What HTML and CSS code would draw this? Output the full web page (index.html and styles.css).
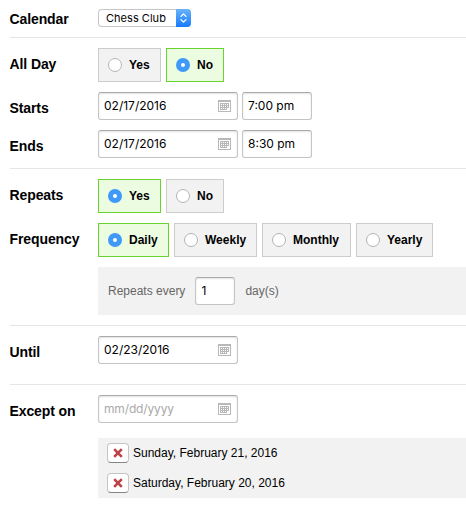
FILE: index.html
```html
<!DOCTYPE html>
<html lang="en">
<head>
<meta charset="utf-8">
<title>Event schedule</title>
<link rel="stylesheet" href="styles.css">
</head>
<body>
<svg class="defs" width="0" height="0">
  <symbol id="cal" viewBox="0 0 13 12">
    <path fill="#b8b8b8" fill-rule="evenodd" d="M0 0h13v12H0zM1 2v9h11V2z"/>
    <path fill="#b8b8b8" d="M2 3h9v1H2zM2 5h9v1H2zM2 7h9v1H2zM2 9h7v1H2zM2 4h1v1H2zM4 4h1v1H4zM6 4h1v1H6zM8 4h1v1H8zM10 4h1v1h-1zM2 6h1v1H2zM4 6h1v1H4zM6 6h1v1H6zM8 6h1v1H8zM10 6h1v1h-1zM2 8h1v1H2zM4 8h1v1H4zM6 8h1v1H6zM8 8h1v1H8z"/>
  </symbol>
  <symbol id="cross" viewBox="0 0 10 10">
    <path stroke="#bd4247" stroke-width="2.6" d="M1.2 1.2l7.6 7.6M8.8 1.2L1.2 8.8"/>
  </symbol>
</svg>
<form class="form">
  <section class="group first">
    <div class="row select-row">
      <span class="label">Calendar</span>
      <div class="select"><span class="select-text">Chess Club</span><span class="stepper"><svg width="9" height="12" viewBox="0 0 9 12"><path d="M2 4.4L4.5 1.9 7 4.4M2 7.6l2.5 2.5L7 7.6"/></svg></span></div>
    </div>
  </section>
  <section class="group">
    <div class="row option-row">
      <span class="label">All Day</span>
      <div class="options">
        <label class="option yes"><i class="radio"></i><span>Yes</span></label>
        <label class="option no on"><i class="radio"></i><span>No</span></label>
      </div>
    </div>
    <div class="row">
      <span class="label">Starts</span>
      <div class="field date"><span>02/17/2016</span><svg width="13" height="12"><use href="#cal"/></svg></div>
      <div class="field time"><span>7:00 pm</span></div>
    </div>
    <div class="row">
      <span class="label">Ends</span>
      <div class="field date"><span>02/17/2016</span><svg width="13" height="12"><use href="#cal"/></svg></div>
      <div class="field time"><span>8:30 pm</span></div>
    </div>
  </section>
  <section class="group">
    <div class="row option-row">
      <span class="label">Repeats</span>
      <div class="options">
        <label class="option yes on"><i class="radio"></i><span>Yes</span></label>
        <label class="option no"><i class="radio"></i><span>No</span></label>
      </div>
    </div>
    <div class="row option-row">
      <span class="label">Frequency</span>
      <div class="options">
        <label class="option daily on"><i class="radio"></i><span>Daily</span></label>
        <label class="option weekly"><i class="radio"></i><span>Weekly</span></label>
        <label class="option monthly"><i class="radio"></i><span>Monthly</span></label>
        <label class="option yearly"><i class="radio"></i><span>Yearly</span></label>
      </div>
    </div>
    <div class="panel interval">
      <span>Repeats every</span>
      <div class="field count"><span>1</span></div>
      <span>day(s)</span>
    </div>
  </section>
  <section class="group until">
    <div class="row">
      <span class="label">Until</span>
      <div class="field date"><span>02/23/2016</span><svg width="13" height="12"><use href="#cal"/></svg></div>
    </div>
  </section>
  <section class="group">
    <div class="row">
      <span class="label">Except on</span>
      <div class="field date empty"><span>mm/dd/yyyy</span><svg width="13" height="12"><use href="#cal"/></svg></div>
    </div>
    <div class="panel exceptions">
      <div class="exception"><button type="button" class="remove" aria-label="Remove"><svg width="10" height="10"><use href="#cross"/></svg></button><span>Sunday, February 21, 2016</span></div>
      <div class="exception"><button type="button" class="remove" aria-label="Remove"><svg width="10" height="10"><use href="#cross"/></svg></button><span>Saturday, February 20, 2016</span></div>
    </div>
  </section>
</form>
</body>
</html>
```
FILE: styles.css
```css
* { box-sizing: border-box; }
body {
  margin: 0;
  background: #fff;
  color: #000;
  font: 12px/16px "Liberation Sans", Arial, sans-serif;
  overflow: hidden;
}
.defs { display: block; }
svg { display: block; }
.form { padding-left: 10px; }
.group {
  display: flex;
  flex-direction: column;
  gap: 10px;
  padding: 10px 0;
  border-top: 1px solid #e5e5e5;
}
.group.first { border-top: 0; padding-top: 9px; }
.group.until { padding-bottom: 20px; }
.row { display: flex; align-items: center; height: 28px; }
.select-row { height: 18px; }
.option-row { height: 34px; }
.label {
  flex: none;
  width: 88px;
  padding-top: 4px;
  font-size: 14px;
  font-weight: bold;
  letter-spacing: -.1px;
  text-indent: -.5px;
  white-space: nowrap;
}
.select-row .label { padding-top: 2px; }
.option-row .label { padding: 0 0 2px; }
.select {
  display: flex;
  justify-content: space-between;
  width: 93px;
  height: 18px;
  border: 1px solid #c6c6c6;
  border-right: 0;
  border-radius: 4px;
  font: 11px/16px Inter, sans-serif;
  letter-spacing: .03px;
}
.select-text { padding-left: 7px; white-space: nowrap; }
.stepper {
  display: flex;
  align-items: center;
  justify-content: center;
  width: 15px;
  height: 18px;
  margin-top: -1px;
  border-radius: 0 4px 4px 0;
  background: linear-gradient(#6bb3fa, #147bfd);
}
.stepper path { fill: none; stroke: #fff; stroke-width: 1.3; stroke-linecap: round; stroke-linejoin: round; }
.options { display: flex; gap: 5px; }
.option {
  display: flex;
  align-items: center;
  gap: 7px;
  height: 34px;
  padding-left: 9px;
  border: 1px solid #ccc;
  background: #f2f2f2;
  font-weight: bold;
  white-space: nowrap;
}
.option.on { border-color: #67d32f; background: #ebfce1; }
.yes { width: 63px; }
.no { width: 58px; }
.daily { width: 71px; }
.weekly { width: 83px; }
.monthly { width: 89px; }
.yearly { width: 77px; }
.radio {
  flex: none;
  width: 14px;
  height: 14px;
  border: 1px solid #b4b4b4;
  border-radius: 50%;
  background: #fff;
}
.on .radio { border: 5px solid #3f99f8; }
.field {
  display: flex;
  align-items: center;
  justify-content: space-between;
  flex: none;
  height: 28px;
  padding: 0 6px 0 5px;
  border: 1px solid #c4c4c4;
  border-top-color: #aaa;
  border-radius: 3px;
  background: #fff;
  box-shadow: inset 0 1px 2px #e2e2e2;
  color: #000;
  font: 12px/26px Inter, sans-serif;
  white-space: nowrap;
}
.date { width: 140px; }
.time { width: 70px; margin-left: 4px; }
.count { width: 40px; }
.empty { color: #a9a9a9; letter-spacing: -.15px; }
.panel { margin-left: 88px; background: #f2f2f2; }
.interval {
  display: flex;
  align-items: center;
  gap: 10px;
  height: 48px;
  padding-left: 10px;
  color: #666;
}
.exceptions { height: 60px; margin-top: 5px; padding-left: 9px; }
.exception { display: flex; align-items: center; gap: 4px; height: 30px; white-space: nowrap; }
.remove {
  display: flex;
  align-items: center;
  justify-content: center;
  width: 22px;
  height: 20px;
  padding: 0;
  border: 1px solid #c5c5c5;
  border-bottom-color: #858585;
  border-radius: 4px;
  background: #fff;
}
```
